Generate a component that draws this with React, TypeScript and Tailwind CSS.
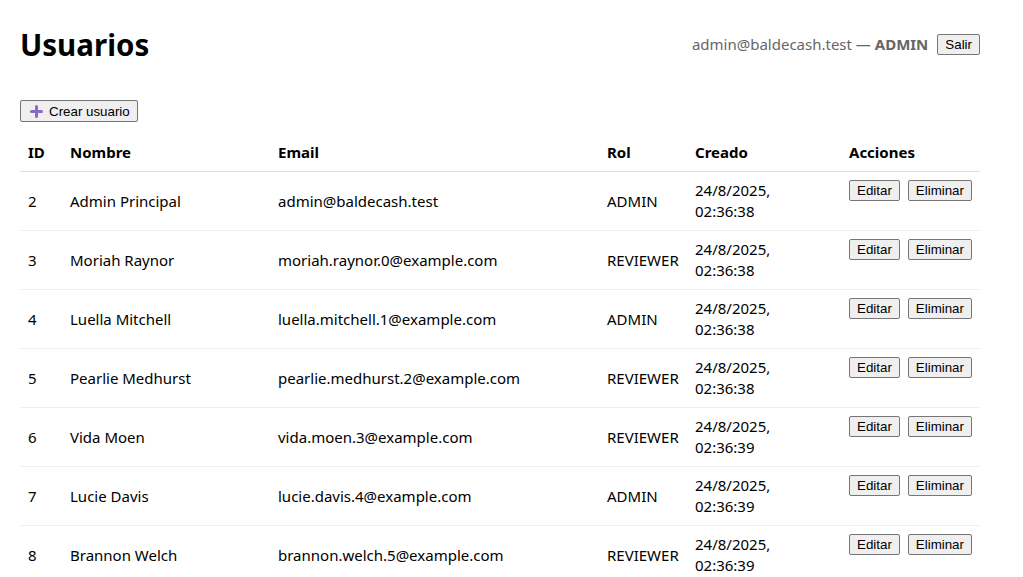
import React from 'react';

interface User {
  id: number;
  name: string;
  email: string;
  role: 'ADMIN' | 'REVIEWER';
  date: string;
  time: string;
}

const users: User[] = [
  { id: 2, name: 'Admin Principal', email: 'admin@baldecash.test', role: 'ADMIN', date: '24/8/2025,', time: '02:36:38' },
  { id: 3, name: 'Moriah Raynor', email: 'moriah.raynor.0@example.com', role: 'REVIEWER', date: '24/8/2025,', time: '02:36:38' },
  { id: 4, name: 'Luella Mitchell', email: 'luella.mitchell.1@example.com', role: 'ADMIN', date: '24/8/2025,', time: '02:36:38' },
  { id: 5, name: 'Pearlie Medhurst', email: 'pearlie.medhurst.2@example.com', role: 'REVIEWER', date: '24/8/2025,', time: '02:36:38' },
  { id: 6, name: 'Vida Moen', email: 'vida.moen.3@example.com', role: 'REVIEWER', date: '24/8/2025,', time: '02:36:39' },
  { id: 7, name: 'Lucie Davis', email: 'lucie.davis.4@example.com', role: 'ADMIN', date: '24/8/2025,', time: '02:36:39' },
  { id: 8, name: 'Brannon Welch', email: 'brannon.welch.5@example.com', role: 'REVIEWER', date: '24/8/2025,', time: '02:36:39' },
  { id: 9, name: 'Jaylin Kuhn', email: 'jaylin.kuhn.6@example.com', role: 'ADMIN', date: '24/8/2025,', time: '02:36:39' },
];

// native-looking button, like the browser default
const btn =
  "font-['Liberation_Sans',Arial,sans-serif] text-[13.33px] leading-[15px] text-black bg-[#efefef] border border-[#767676] rounded-[2px] px-[7px] h-[21px] hover:bg-[#e5e5e5]";

const PlusIcon = () => (
  <svg width="13" height="13" viewBox="0 0 13 13" className="mr-[6px]">
    <path d="M6.5 1.5v10M1.5 6.5h10" stroke="#8b69c9" strokeWidth="3" strokeLinecap="round" />
  </svg>
);

export default function App() {
  return (
    <div className="w-[960px] ml-5 font-['Noto_Sans',sans-serif] text-black text-[15px] leading-[21px]">
      <div className="flex items-center justify-between pt-[23px] h-[66px]">
        <h1 className="text-[29.5px] leading-[43px] font-bold">Usuarios</h1>
        <div className="flex items-center gap-[9px]">
          <span className="text-[#666]">
            admin@baldecash.test — <b>ADMIN</b>
          </span>
          <button className={btn}>Salir</button>
        </div>
      </div>

      <button className={`${btn} mt-[34px] flex items-center pl-[9px] pr-[7px] h-[22px]`}>
        <PlusIcon />
        Crear usuario
      </button>

      <table className="w-full mt-3 border-collapse text-left table-fixed">
        <thead>
          <tr className="border-b border-[#ddd]">
            <th className="w-[42px] p-2 font-bold">ID</th>
            <th className="w-[208px] p-2 font-bold">Nombre</th>
            <th className="w-[329px] p-2 font-bold">Email</th>
            <th className="w-[88px] p-2 font-bold">Rol</th>
            <th className="w-[154px] p-2 font-bold">Creado</th>
            <th className="p-2 font-bold">Acciones</th>
          </tr>
        </thead>
        <tbody>
          {users.map(u => (
            <tr key={u.id} className="border-b border-[#eee]">
              <td className="p-2 align-middle">{u.id}</td>
              <td className="p-2 align-middle">{u.name}</td>
              <td className="p-2 align-middle">{u.email}</td>
              <td className="p-2 align-middle">{u.role}</td>
              <td className="p-2 align-middle">
                {u.date}
                <br />
                {u.time}
              </td>
              <td className="p-2 align-top">
                <div className="flex gap-2">
                  <button className={btn}>Editar</button>
                  <button className={btn}>Eliminar</button>
                </div>
              </td>
            </tr>
          ))}
        </tbody>
      </table>
    </div>
  );
}
